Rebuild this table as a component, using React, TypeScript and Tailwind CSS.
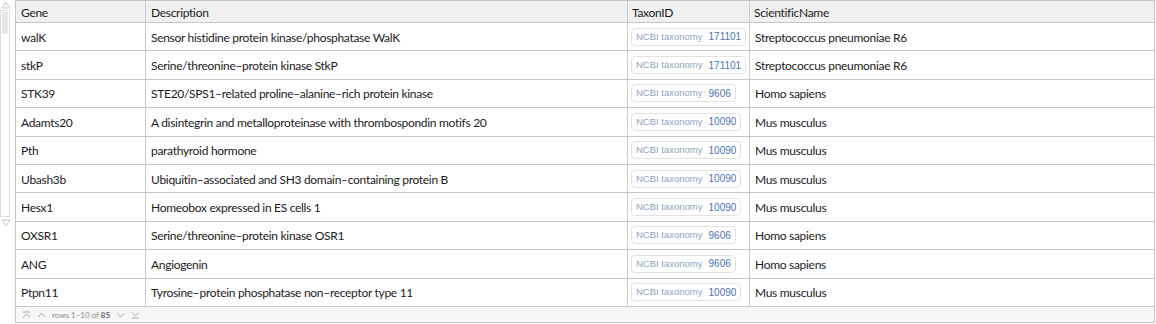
import React from "react"

type Row = {
  gene: string
  description: string
  taxon: string
  name: string
}

const rows: Row[] = [
  { gene: "walK", description: "Sensor histidine protein kinase/phosphatase WalK", taxon: "171101", name: "Streptococcus pneumoniae R6" },
  { gene: "stkP", description: "Serine/threonine\u2013protein kinase StkP", taxon: "171101", name: "Streptococcus pneumoniae R6" },
  { gene: "STK39", description: "STE20/SPS1\u2013related proline\u2013alanine\u2013rich protein kinase", taxon: "9606", name: "Homo sapiens" },
  { gene: "Adamts20", description: "A disintegrin and metalloproteinase with thrombospondin motifs 20", taxon: "10090", name: "Mus musculus" },
  { gene: "Pth", description: "parathyroid hormone", taxon: "10090", name: "Mus musculus" },
  { gene: "Ubash3b", description: "Ubiquitin\u2013associated and SH3 domain\u2013containing protein B", taxon: "10090", name: "Mus musculus" },
  { gene: "Hesx1", description: "Homeobox expressed in ES cells 1", taxon: "10090", name: "Mus musculus" },
  { gene: "OXSR1", description: "Serine/threonine\u2013protein kinase OSR1", taxon: "9606", name: "Homo sapiens" },
  { gene: "ANG", description: "Angiogenin", taxon: "9606", name: "Homo sapiens" },
  { gene: "Ptpn11", description: "Tyrosine\u2013protein phosphatase non\u2013receptor type 11", taxon: "10090", name: "Mus musculus" },
]

const cols = "grid grid-cols-[130px_482px_122px_1fr]"

function Scrollbar() {
  return (
    <div className="flex w-[15px] flex-col items-start pt-[1px]">
      <svg width="10" height="8" viewBox="0 0 10 8" className="ml-[1px]">
        <path d="M5 1 L9 7 L1 7 Z" fill="none" stroke="#c9c9c9" strokeWidth="1" />
      </svg>
      <div className="mt-[1px] h-[207px] w-[10px] border border-[#dcdcdc] bg-white p-px">
        <div className="h-[22px] w-full bg-[#e6e6e6]" />
      </div>
      <svg width="10" height="8" viewBox="0 0 10 8" className="ml-[1px] mt-[2px]">
        <path d="M1 1 L9 1 L5 7 Z" fill="none" stroke="#c9c9c9" strokeWidth="1" />
      </svg>
    </div>
  )
}

function Badge({ id }: { id: string }) {
  return (
    <div className="flex h-[18px] items-center gap-[6px] rounded-[4px] border border-[#e2e2e2] bg-white px-[4px] font-['Liberation_Sans',sans-serif] tracking-normal">
      <span className="text-[9.5px] text-[#8ea3c4]">NCBI taxonomy</span>
      <span className="text-[10px] text-[#4a73b3]">{id}</span>
    </div>
  )
}

function Chevron({ d }: { d: string }) {
  return (
    <svg width="9" height="8" viewBox="0 0 9 8">
      <path d={d} fill="none" stroke="#9a9a9a" strokeWidth="0.9" />
    </svg>
  )
}

export default function App() {
  return (
    <div className="flex h-[324px] w-[1156px] bg-white font-['Lato',sans-serif] text-[#1b1b1b]">
      <Scrollbar />
      <div className="h-[323px] w-[1140px] border border-[#c6c6c6]">
        <div className={`${cols} h-[22px] border-b border-[#c6c6c6] bg-[#f0f0f0] text-[12px] tracking-[-0.3px]`}>
          <div className="flex items-center border-r border-[#cdcdcd] pl-[5px] pt-[2px]">Gene</div>
          <div className="flex items-center border-r border-[#cdcdcd] pl-[5px] pt-[2px]">Description</div>
          <div className="flex items-center border-r border-[#cdcdcd] pl-[4px] pt-[2px]">TaxonID</div>
          <div className="flex items-center pl-[4px] pt-[2px]">ScientificName</div>
        </div>
        {rows.map((r) => (
          <div key={r.gene} className={`${cols} h-[28.4px] border-b border-[#c6c6c6] text-[12px] tracking-[-0.3px]`}>
            <div className="flex items-center border-r border-[#cdcdcd] pl-[5px] pt-[2px]">{r.gene}</div>
            <div className="flex items-center border-r border-[#cdcdcd] pl-[5px] pt-[2px]">{r.description}</div>
            <div className="flex items-center border-r border-[#cdcdcd] pl-[3px]">
              <Badge id={r.taxon} />
            </div>
            <div className="flex items-center pl-[5px] pt-[2px]">{r.name}</div>
          </div>
        ))}
        <div className="flex h-[15px] items-center gap-[6px] bg-[#f7f7f7] pl-[6px] pt-px text-[8px] text-[#8a8a8a]">
          <Chevron d="M1 1 H8 M1 6.5 L4.5 3 L8 6.5" />
          <Chevron d="M1 6 L4.5 2 L8 6" />
          <span>
            rows 1–10 of <span className="font-bold text-[#666]">85</span>
          </span>
          <Chevron d="M1 2 L4.5 6 L8 2" />
          <Chevron d="M1 1.5 L4.5 5 L8 1.5 M1 7 H8" />
        </div>
      </div>
    </div>
  )
}
